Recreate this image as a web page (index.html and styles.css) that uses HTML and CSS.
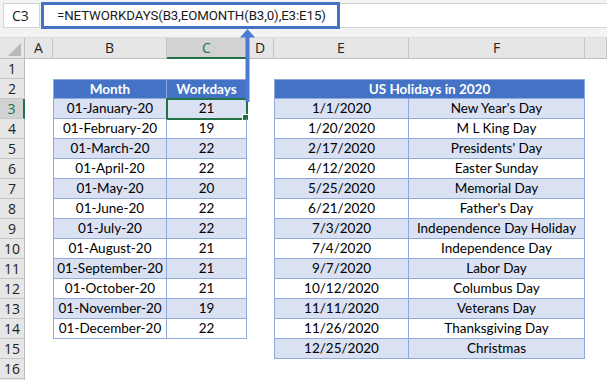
FILE: index.html
```html
<!DOCTYPE html>
<html lang="en">
<head>
<meta charset="utf-8">
<title>NETWORKDAYS</title>
<link rel="stylesheet" href="styles.css">
</head>
<body>
<div class="app">
  <div class="bar">
    <div class="namebox">C3</div>
    <div class="fx">=NETWORKDAYS(B3,EOMONTH(B3,0),E3:E15)<span class="callout"></span></div>
  </div>
  <div class="gap"></div>
  <div class="sheet">
    <div class="row colheads">
      <div class="corner"><span class="tri"></span></div>
      <div class="ch">A</div><div class="ch">B</div><div class="ch sel">C</div><div class="ch">D</div><div class="ch">E</div><div class="ch">F</div><div class="ch"></div>
    </div>
    <div class="row"><div class="rh">1</div><div></div><div></div><div></div><div></div><div></div><div></div><div></div></div>
    <div class="row"><div class="rh">2</div><div></div><div class="t hd l top">Month</div><div class="t hd top">Workdays</div><div></div><div class="t hd l top span">US Holidays in 2020</div><div></div></div>
    <div class="row"><div class="rh sel">3</div><div></div><div class="t f l">01-January-20</div><div class="t f cur">21<span class="handle"></span></div><div></div><div class="t f l">1/1/2020</div><div class="t f">New Year's Day</div><div></div></div>
    <div class="row"><div class="rh">4</div><div></div><div class="t l">01-February-20</div><div class="t">19</div><div></div><div class="t l">1/20/2020</div><div class="t">M L King Day</div><div></div></div>
    <div class="row"><div class="rh">5</div><div></div><div class="t f l">01-March-20</div><div class="t f">22</div><div></div><div class="t f l">2/17/2020</div><div class="t f">Presidents' Day</div><div></div></div>
    <div class="row"><div class="rh">6</div><div></div><div class="t l">01-April-20</div><div class="t">22</div><div></div><div class="t l">4/12/2020</div><div class="t">Easter Sunday</div><div></div></div>
    <div class="row"><div class="rh">7</div><div></div><div class="t f l">01-May-20</div><div class="t f">20</div><div></div><div class="t f l">5/25/2020</div><div class="t f">Memorial Day</div><div></div></div>
    <div class="row"><div class="rh">8</div><div></div><div class="t l">01-June-20</div><div class="t">22</div><div></div><div class="t l">6/21/2020</div><div class="t">Father's Day</div><div></div></div>
    <div class="row"><div class="rh">9</div><div></div><div class="t f l">01-July-20</div><div class="t f">22</div><div></div><div class="t f l">7/3/2020</div><div class="t f">Independence Day Holiday</div><div></div></div>
    <div class="row"><div class="rh">10</div><div></div><div class="t l">01-August-20</div><div class="t">21</div><div></div><div class="t l">7/4/2020</div><div class="t">Independence Day</div><div></div></div>
    <div class="row"><div class="rh">11</div><div></div><div class="t f l">01-September-20</div><div class="t f">21</div><div></div><div class="t f l">9/7/2020</div><div class="t f">Labor Day</div><div></div></div>
    <div class="row"><div class="rh">12</div><div></div><div class="t l">01-October-20</div><div class="t">21</div><div></div><div class="t l">10/12/2020</div><div class="t">Columbus Day</div><div></div></div>
    <div class="row"><div class="rh">13</div><div></div><div class="t f l">01-November-20</div><div class="t f">19</div><div></div><div class="t f l">11/11/2020</div><div class="t f">Veterans Day</div><div></div></div>
    <div class="row"><div class="rh">14</div><div></div><div class="t l">01-December-20</div><div class="t">22</div><div></div><div class="t l">11/26/2020</div><div class="t">Thanksgiving Day</div><div></div></div>
    <div class="row"><div class="rh">15</div><div></div><div></div><div></div><div></div><div class="t f l">12/25/2020</div><div class="t f">Christmas</div><div></div></div>
    <div class="row"><div class="rh">16</div><div></div><div></div><div></div><div></div><div></div><div></div><div></div></div>
    <div class="row"><div class="rh"></div><div></div><div></div><div></div><div></div><div></div><div></div><div></div></div>
  </div>
  <!-- callout arrow from the selected cell up to the formula -->
  <svg class="arrow" width="20" height="76" viewBox="0 0 20 76">
    <polygon points="7.5,0 0,8.5 5.5,8.5 5.5,73 9.5,73 9.5,8.5 15,8.5" fill="#4a7bd0"/>
  </svg>
</div>
</body>
</html>
```

FILE: styles.css
```css
* { box-sizing: border-box; }
html, body { margin: 0; padding: 0; }
body { width: 607px; height: 380px; overflow: hidden; background: #fff; }

.app { position: relative; width: 607px; height: 380px; overflow: hidden; }

/* formula bar */
.bar {
  height: 31px;
  background: #f3f3f3;
  display: flex;
  align-items: flex-start;
  padding: 3px 0 0 3px;
  gap: 1px;
}
.namebox {
  width: 37px;
  height: 25px;
  background: #fff;
  border: 1px solid #d4d4d4;
  font: 14px "Open Sans", sans-serif;
  color: #222;
  line-height: 23px;
  padding-left: 8px;
}
.fx {
  flex: 1;
  height: 25px;
  background: #fff;
  border-top: 1px solid #d4d4d4;
  border-bottom: 1px solid #d4d4d4;
  position: relative;
  font: 13.3px Roboto, sans-serif;
  letter-spacing: -0.1px;
  color: #1a1a1a;
  line-height: 23px;
  padding-left: 16px;
  white-space: nowrap;
}
/* highlight frame around the formula text */
.callout {
  position: absolute;
  left: 0;
  top: -2px;
  width: 299px;
  height: 27px;
  border: 3px solid #4472c4;
}
.gap { height: 7px; background: #f3f3f3; border-bottom: 1px solid #dadada; }

/* grid */
.row {
  display: grid;
  grid-template-columns: 25px 28px 114px 80px 27px 135px 176px 1fr;
  height: 20px;
}
.colheads { height: 21px; background: #e6e6e6; border-bottom: 1px solid #bdbdbd; }
.corner { position: relative; border-right: 1px solid #bdbdbd; }
.tri {
  position: absolute;
  right: 3px;
  bottom: 3px;
  width: 0;
  height: 0;
  border-left: 13px solid transparent;
  border-bottom: 13px solid #b9b9b9;
}
.ch {
  border-right: 1px solid #c4c4c4;
  font: 14px "Open Sans", sans-serif;
  color: #222;
  text-align: center;
  line-height: 20px;
}
.ch.sel { background: #d2d2d2; color: #217346; border-bottom: 2px solid #217346; line-height: 19px; }

.rh {
  background: #e6e6e6;
  border-right: 1px solid #bdbdbd;
  border-bottom: 1px solid #c8c8c8;
  font: 14px "Open Sans", sans-serif;
  color: #222;
  text-align: center;
  line-height: 19px;
}
.rh.sel { background: #d2d2d2; color: #217346; border-right: 2px solid #217346; }

/* formatted table cells */
.t {
  border-right: 1px solid #8ea9db;
  border-bottom: 1px solid #8ea9db;
  font: 13.5px Lato, sans-serif;
  color: #000;
  text-align: center;
  line-height: 19px;
  white-space: nowrap;
  position: relative;
}
.t.l { border-left: 1px solid #8ea9db; }
.t.top { border-top: 1px solid #8ea9db; line-height: 18px; }
.t.f { background: #d9e1f2; }
.t.hd { background: #4472c4; color: #fff; font-weight: bold; }
.t.span { grid-column: span 2; }

/* active cell */
.cur { outline: 2px solid #217346; outline-offset: -1px; }
.handle {
  position: absolute;
  right: -3px;
  bottom: -3px;
  width: 5px;
  height: 5px;
  background: #217346;
  border: 1px solid #fff;
  box-sizing: content-box;
}

.arrow { position: absolute; left: 240px; top: 29px; }
```
